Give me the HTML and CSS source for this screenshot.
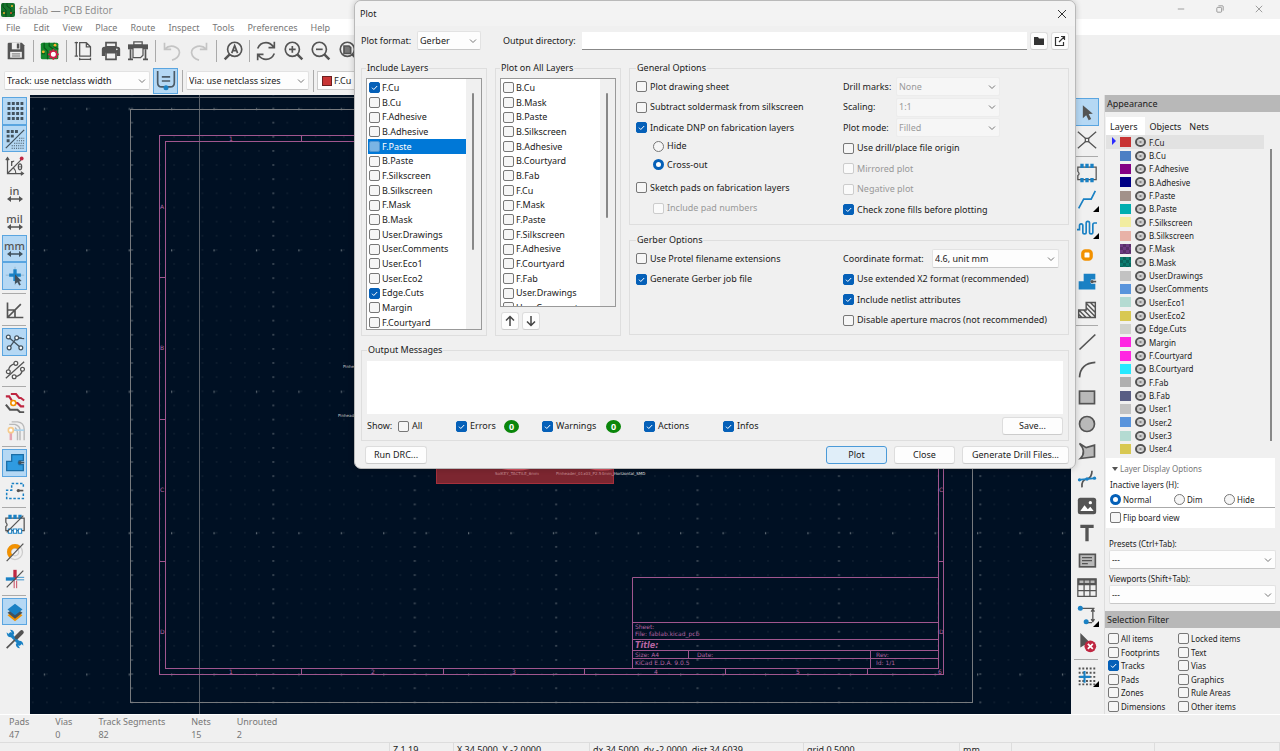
FILE: index.html
```html
<!DOCTYPE html>
<html lang="en">
<head>
<meta charset="utf-8">
<title>fablab — PCB Editor</title>
<link rel="stylesheet" href="styles.css">
</head>
<body>
<div class="app">
  <header class="titlebar">
    <svg class="app-icon" viewBox="0 0 14 14"><rect width="14" height="14" rx="2" fill="#14722a"/><path d="M2 0v4l3 3v7M6 0v3l4 3v3M0 9h3l2 3M10 14v-3l4-2" fill="none" stroke="#0a4a18"/><circle cx="11" cy="3" r="1" fill="#f5b12c"/><circle cx="3" cy="10" r="1" fill="#f5b12c"/><circle cx="10" cy="10" r="1" fill="#d9502c"/></svg>
    <span class="title-text">fablab — PCB Editor</span>
    <div class="window-buttons">
      <button aria-label="Minimize"><svg viewBox="0 0 10 10"><path d="M1 5h8"/></svg></button>
      <button aria-label="Restore"><svg viewBox="0 0 10 10"><rect x="1" y="3" width="6" height="6" rx="1"/><path d="M3 1h5q1 0 1 1v5"/></svg></button>
      <button aria-label="Close window"><svg viewBox="0 0 10 10"><path d="M1 1l8 8M9 1l-8 8"/></svg></button>
    </div>
  </header>
  <nav class="menubar">
    <button>File</button><button>Edit</button><button>View</button><button>Place</button><button>Route</button><button>Inspect</button><button>Tools</button><button>Preferences</button><button>Help</button>
  </nav>
  <div class="toolbar main-tools">
    <button class="tool" aria-label="Save"><svg viewBox="0 0 24 24"><path d="M3 2h16l3 3v17H2V3z" fill="#545454"/><path d="M7 2h10v8H7z" fill="#f0f0f0"/><path d="M13 3h3v6h-3z" fill="#545454"/><path d="M5 13h14v7H5z" fill="#f0f0f0"/><path d="M7 15.500h10M7 18h10" stroke="#545454"/></svg></button>
    <span class="sep"></span>
    <button class="tool" aria-label="Board setup"><svg viewBox="0 0 24 24"><rect x="1" y="2" width="21" height="20" rx="2" fill="#168a2e"/><path d="M5 2v6l4 4v10M11 2v4l5 4M2 15h4M17 2v5l5 3" fill="none" stroke="#0a5a1a" stroke-width="1.500"/><circle cx="4" cy="13" r="1.700" fill="#f5b12c"/><circle cx="18" cy="5" r="1.700" fill="#f5b12c"/><circle cx="16" cy="16" r="4" fill="#fff" stroke="#d0214a" stroke-width="2"/><path d="M16 9.500v3M16 19.500v3M9.500 16h3M19.500 16h3M11.500 11.500l2 2M18.500 18.500l2 2M20.500 11.500l-2 2M13.500 18.500l-2 2" stroke="#d0214a" stroke-width="2"/></svg></button>
    <span class="sep"></span>
    <button class="tool" aria-label="Page settings"><svg viewBox="0 0 24 24" class="line thin"><path d="M8 2h8l5 5v11H8zM16 2v5h5M4 1v17M2 2h4M2 18h4M8 22h13M8 20v3M21 20v3"/></svg></button>
    <button class="tool" aria-label="Print"><svg viewBox="0 0 24 24"><path d="M6 2h12v5H6z" fill="#f0f0f0" stroke="#545454" stroke-width="2"/><path d="M4 7h16q3 0 3 3v8h-4v-4H5v4H1v-8q0-3 3-3z" fill="#545454"/><path d="M6 14h12v8H6z" fill="#f0f0f0" stroke="#545454" stroke-width="2"/><circle cx="19" cy="10" r="1" fill="#fff"/></svg></button>
    <button class="tool" aria-label="Plot"><svg viewBox="0 0 24 24"><path d="M7 1h10v4H7z" fill="#f0f0f0" stroke="#545454" stroke-width="1.500"/><path d="M0 4h24v6H0z" fill="#545454"/><path d="M6 8h12v9l-3 3H6z" fill="#f0f0f0" stroke="#545454" stroke-width="1.500"/><path d="M3 10v12M21 10v12M0 22h6M18 22h6" fill="none" stroke="#545454" stroke-width="2"/></svg></button>
    <span class="sep"></span>
    <button class="tool" aria-label="Undo"><svg viewBox="0 0 24 24" class="line faint"><path d="M3 2v8h8M3 10q5-5 11-3.500q7 2 7 7.500q-1 7-9 9"/></svg></button>
    <button class="tool" aria-label="Redo"><svg viewBox="0 0 24 24" class="line faint"><path d="M21 2v8h-8M21 10q-5-5-11-3.500q-7 2-7 7.500q1 7 9 9"/></svg></button>
    <span class="sep"></span>
    <button class="tool" aria-label="Find"><svg viewBox="0 0 24 24" class="line"><circle cx="14" cy="10" r="8.500"/><path d="M8 16l-6 6" stroke-width="3"/><path d="M10.500 14.500L14 5.500l3.500 9M12 11.500h4"/></svg></button>
    <span class="sep"></span>
    <button class="tool" aria-label="Refresh"><svg viewBox="0 0 24 24" class="line"><path d="M2 9q3-7 10-7q5 0 9 5M22 1v7h-7M22 15q-3 7-10 7q-5 0-9-5M2 23v-7h7"/></svg></button>
    <button class="tool" aria-label="Zoom in"><svg viewBox="0 0 24 24" class="line"><circle cx="10" cy="10" r="8.500"/><path d="M16 16l6 6" stroke-width="3"/><path d="M6 10h8M10 6v8"/></svg></button>
    <button class="tool" aria-label="Zoom out"><svg viewBox="0 0 24 24" class="line"><circle cx="10" cy="10" r="8.500"/><path d="M16 16l6 6" stroke-width="3"/><path d="M6 10h8"/></svg></button>
    <button class="tool" aria-label="Zoom to fit"><svg viewBox="0 0 24 24" class="line"><circle cx="10" cy="10" r="8.500"/><path d="M16 16l6 6" stroke-width="3"/><path d="M6 6h6l2 2v7H6z" fill="#777"/></svg></button>
  </div>
  <div class="toolbar aux-tools">
    <select class="select track-select" aria-label="Track width"><option>Track: use netclass width</option></select>
    <button class="tool on" aria-label="Auto track width"><svg viewBox="0 0 24 24"><path d="M2 0v14q0 5 5 5h10q5 0 5-5V0M7 7h10M7 12h10" fill="none" stroke="#4b5a66" stroke-width="2"/><circle cx="12" cy="20" r="3" fill="#1a81c4"/></svg></button>
    <span class="sep"></span>
    <select class="select via-select" aria-label="Via size"><option>Via: use netclass sizes</option></select>
    <span class="sep"></span>
    <div class="layer-select"><span class="swatch"></span><select class="select" aria-label="Active layer"><option>F.Cu</option></select></div>
  </div>

  <main class="workspace">
    <div class="side-tools">
      <button class="tool on" aria-label="Show grid"><svg viewBox="0 0 24 24"><path d="M3 3h19M3 9h19M3 15h19M3 21h19" stroke="#42525e" stroke-width="3.500" stroke-dasharray="3.500 1.700"/></svg></button>
      <button class="tool on" aria-label="Grid overrides"><svg viewBox="0 0 24 24"><path d="M2 3h14M2 8.500h9M2 14h4" stroke="#42525e" stroke-width="3.500" stroke-dasharray="3.500 1.500"/><path d="M1 23L23 1" stroke="#42525e" stroke-width="1.500"/><path d="M17 11h6M14 14h9M11 17h12M8 20h15M8 23h15" stroke="#42525e" stroke-width="1.300" stroke-dasharray="1.300 1.300"/></svg></button>
      <button class="tool" aria-label="Polar coordinates"><svg viewBox="0 0 24 24" class="line"><path d="M3 2v19h19M3 21L19 5M10 14q3 3 3 7M1 5l2-3 2 3M19 19l3 2-3 2" stroke-width="1.500"/><path d="M8 12V6M8 8q1-2 3-2" stroke-width="1.500"/><ellipse cx="18" cy="13" rx="2" ry="3.500" stroke-width="1.500"/><path d="M16 13h4" stroke-width="1"/><circle cx="20" cy="3" r="2.300" fill="#bf2641" stroke="none"/></svg></button>
      <button class="tool unit" aria-label="Inches"><span>in</span><svg viewBox="0 0 18 6"><path d="M3 3h12" stroke="#545454" stroke-width="1.500"/><path d="M5 0v6L1 3zM13 0v6l4-3z" fill="#545454"/></svg></button>
      <button class="tool unit" aria-label="Mils"><span>mil</span><svg viewBox="0 0 18 6"><path d="M3 3h12" stroke="#545454" stroke-width="1.500"/><path d="M5 0v6L1 3zM13 0v6l4-3z" fill="#545454"/></svg></button>
      <button class="tool unit on" aria-label="Millimeters"><span>mm</span><svg viewBox="0 0 18 6"><path d="M3 3h12" stroke="#42525e" stroke-width="1.500"/><path d="M5 0v6L1 3zM13 0v6l4-3z" fill="#42525e"/></svg></button>
      <button class="tool on" aria-label="Full-window crosshair"><svg viewBox="0 0 24 24"><path d="M12 1v22M1 11h22" stroke="#8fb0c8"/><path d="M12 4v14M5 11h14" stroke="#1a81c4" stroke-width="4"/><path d="M12 10l8 8-3 .5 2 4-2 1-2-4-3 2z" fill="#42525e"/></svg></button>
      <span class="sep"></span>
      <button class="tool" aria-label="Constrain angles"><svg viewBox="0 0 24 24" class="line"><path d="M3 3v18h19M3 21L19 5M3 12h9v9" stroke-width="2"/></svg></button>
      <span class="sep"></span>
      <button class="tool on" aria-label="Ratsnest"><svg viewBox="0 0 24 24" class="line"><path d="M4 6l15 13M5 19L14 7l9 1M13 7h7" stroke="#42525e" stroke-width="1.500"/><g fill="#fff" stroke="#42525e" stroke-width="1.500"><circle cx="4" cy="6" r="2.300"/><circle cx="14" cy="7" r="2.300"/><circle cx="5" cy="19" r="2.300"/><circle cx="19" cy="19" r="2.300"/></g></svg></button>
      <button class="tool" aria-label="Curved ratsnest"><svg viewBox="0 0 24 24" class="line"><path d="M1 22L23 2M4 14q0-8 9-10M11 20q9 0 10-9" stroke-width="1.500"/><g fill="#fff" stroke-width="1.500"><circle cx="4" cy="14" r="2.300"/><circle cx="13" cy="4" r="2.300"/><circle cx="11" cy="20" r="2.300"/><circle cx="21" cy="11" r="2.300"/></g></svg></button>
      <span class="sep"></span>
      <button class="tool" aria-label="Highlight nets"><svg viewBox="0 0 24 24" class="line"><path d="M7 1h6l4 5h2l4 3M1 4h4l5 8h5l4 4h4" stroke="#bf2641" stroke-width="2.500"/><path d="M1 14l5 6h9l3 3h5" stroke-width="2.500"/><circle cx="10" cy="12" r="3" fill="#fff" stroke="#f29100" stroke-width="2"/></svg></button>
      <button class="tool" aria-label="Net colors"><svg viewBox="0 0 24 24" class="line"><path d="M5 4h7q6 2 6 7v12M12 8q3 2 3 6v9M8 1h7q8 1 8 9v13" stroke="#b9b9b9" stroke-width="1.700"/><path d="M7 12v11" stroke="#e6a4b1" stroke-width="3"/><path d="M7 11h16" stroke="#a9d2ec" stroke-width="2"/><circle cx="7" cy="11" r="3" fill="#fff" stroke="#f6cb8b"/></svg></button>
      <span class="sep"></span>
      <button class="tool on" aria-label="Show zone fills"><svg viewBox="0 0 24 24"><path d="M8 2h14v7h-5q-2 3 0 5h5v7H2V10h6z" fill="#2f9be0" stroke="#1a6da6" stroke-width="1.500"/><circle cx="18" cy="11.500" r="2" fill="#42525e"/><path d="M18 11.500h5" stroke="#42525e" stroke-width="2"/></svg></button>
      <button class="tool" aria-label="Show zone outlines"><svg viewBox="0 0 24 24"><path d="M8 3h14v4M22 15v6H2V11h6V3" fill="none" stroke="#1a81c4" stroke-width="1.800" stroke-dasharray="3 2"/><circle cx="16" cy="11.500" r="2" fill="#545454"/><path d="M16 11.500h6" stroke="#545454" stroke-width="2"/></svg></button>
      <span class="sep"></span>
      <button class="tool" aria-label="Sketch footprints"><svg viewBox="0 0 24 24"><path d="M1 5h22v15H1v-5q3-2 0-5z" fill="none" stroke="#545454" stroke-width="1.500"/><path d="M4 1h4v5H4zM10 1h4v5h-4zM16 1h4v5h-4z" fill="#1a81c4"/><path d="M4 18h4v5H4zM10 18h4v5h-4zM16 18h4v5h-4z" fill="#fff" stroke="#1a81c4" stroke-width="1.300"/><path d="M2 22L22 2" stroke="#545454" stroke-width="1.500"/></svg></button>
      <button class="tool" aria-label="Sketch vias"><svg viewBox="0 0 24 24"><circle cx="12" cy="12" r="9" fill="none" stroke="#ccc" stroke-width="1.500"/><circle cx="12" cy="12" r="4.500" fill="none" stroke="#ccc" stroke-width="1.500"/><path d="M7 17A7 7 0 0 1 17 7" fill="none" stroke="#f29100" stroke-width="5"/><path d="M2 23L22 2" stroke="#545454" stroke-width="1.500"/></svg></button>
      <button class="tool" aria-label="Sketch tracks"><svg viewBox="0 0 24 24"><path d="M12 1v12" stroke="#bf2641" stroke-width="4"/><path d="M1 12h11" stroke="#1a81c4" stroke-width="4"/><path d="M14 10h9M14 13h9" stroke="#1a81c4"/><path d="M11 14v9M14 14v9" stroke="#bf2641"/><path d="M2 22L22 2" stroke="#545454" stroke-width="1.500"/></svg></button>
      <span class="sep"></span>
      <button class="tool on" aria-label="Layers manager"><svg viewBox="0 0 24 24"><path d="M3 16l9-6 9 6-9 7z" fill="#f29100"/><path d="M3 13l9-6 9 6-9 7z" fill="#42525e"/><path d="M3 9l9-7 9 7-9 7z" fill="#1a81c4"/></svg></button>
      <button class="tool" aria-label="Properties"><svg viewBox="0 0 24 24"><path d="M5 5l14 14" stroke="#1a81c4" stroke-width="4"/><path d="M2 4l3 3 3-3-2-3q5 0 5 5l-4 4q-5 0-5-6zM22 20l-3-3-3 3 2 3q-5 0-5-5l4-4q5 0 5 6z" fill="#1a81c4"/><path d="M2 23l10-10" stroke="#545454" stroke-width="2"/><path d="M14 10l6-6" stroke="#545454" stroke-width="5" stroke-linecap="round"/></svg></button>
    </div>

    <svg class="canvas" viewBox="30 95 1041 619" preserveAspectRatio="xMidYMid slice">
      <defs>
        <pattern id="grid" x="-3" y="101" width="14.140" height="14.140" patternUnits="userSpaceOnUse"><rect x="7" y="7" width="1" height="1" fill="#2b3846"/></pattern>
        <pattern id="major" x="60" y="101" width="141.400" height="14.140" patternUnits="userSpaceOnUse"><rect x="71" y="7" width="2" height="1" fill="#59646d"/></pattern>
        <pattern id="rows" x="30" y="37" width="42.420" height="141.400" patternUnits="userSpaceOnUse"><rect x="14" y="71" width="1" height="2" fill="#7b858c"/></pattern>
      </defs>
      <rect x="30" y="95" width="1041" height="619" fill="#001023"/>
      <rect x="30" y="95" width="1041" height="619" fill="url(#grid)"/>
      <rect x="30" y="95" width="1041" height="619" fill="url(#major)"/>
      <rect x="30" y="95" width="1041" height="619" fill="url(#rows)"/>
      <g fill="none" stroke="#596069"><path d="M30 97.500h1041M199.500 95v619"/><rect x="130.500" y="109.500" width="842" height="593" stroke="#777a7e"/></g>
      <g fill="none" stroke="#a0568f">
        <rect x="159.500" y="135.500" width="784" height="539"/><rect x="165.500" y="141.500" width="773" height="527"/>
        <path d="M301.500 135v6M443.500 135v6M301.500 668v6M443.500 668v6M584.500 668v6M725.500 668v6M867.500 668v6M159 277.500h6M159 419.500h6M159 561.500h6M938 561.500h6"/>
        <path d="M632.500 668V577.500H938M632 622.500h306M632 639.500h306M632 650.500h306M632 658.500h306M688.500 650v8M870.500 650v18"/>
      </g>
      <g class="sheet-text">
        <text x="229" y="141">1</text><text x="229" y="674">1</text><text x="371" y="674">2</text><text x="512" y="674">3</text><text x="654" y="674">4</text><text x="796" y="674">5</text><text x="938" y="674">6</text>
        <text x="160" y="209">A</text><text x="160" y="350">B</text><text x="160" y="492">C</text><text x="160" y="634">D</text><text x="939" y="492">C</text><text x="939" y="634">D</text>
        <text x="635" y="629">Sheet:</text><text x="635" y="636">File: fablab.kicad_pcb</text><text x="635" y="648" class="sheet-title">Title:</text>
        <text x="635" y="657">Size: A4</text><text x="697" y="657">Date:</text><text x="876" y="657">Rev:</text><text x="635" y="665">KiCad E.D.A. 9.0.5</text><text x="876" y="665">Id: 1/1</text>
      </g>
      <rect x="436.500" y="400.500" width="177" height="83" fill="#7c2630" stroke="#a5303c"/>
      <path d="M502 468q14 3 28 0M590 468q12 3 24 0" fill="none" stroke="#d5505f" stroke-width="2"/>
      <g class="board-text"><text x="343" y="368">Pinheader</text><text x="338" y="417">Pinheader</text><text x="495" y="475" fill="#c98f95">SolKEY_TACTILE_6mm</text><text x="556" y="475" fill="#c98f95">Pinheader_01x03_P2.54mm<tspan fill="#e0e0e0">_Horizontal_SMD</tspan></text></g>
    </svg>

    <div class="side-tools right-tools">
      <button class="tool on" aria-label="Select"><svg viewBox="0 0 24 24"><path d="M7 4l12 10-5 .5 3 6-3 1.500-3-6-4 3.500z" fill="#545454"/></svg></button>
      <button class="tool" aria-label="Local ratsnest"><svg viewBox="0 0 24 24" class="line thin"><rect x="10" y="10" width="4" height="4"/><path d="M10 10L1 2M14 10l9-8M10 14l-9 8M14 14l9 8"/></svg></button>
      <span class="sep"></span>
      <button class="tool" aria-label="Footprint"><svg viewBox="0 0 24 24"><path d="M1 5h22v15H1v-5q3-2 0-5z" fill="none" stroke="#545454" stroke-width="1.500"/><path d="M4 1h4v5H4zM10 1h4v5h-4zM16 1h4v5h-4zM4 18h4v5H4zM10 18h4v5h-4zM16 18h4v5h-4z" fill="#1a81c4"/></svg></button>
      <button class="tool more" aria-label="Route track"><svg viewBox="0 0 24 24" class="line"><path d="M2 22l6-11h9l5-10" stroke="#1a81c4"/></svg></button>
      <button class="tool more" aria-label="Tune length"><svg viewBox="0 0 24 24" class="line"><path d="M0 14h3V9q0-2 2-2t2 2v8q0 2 2 2t2-2V6q0-2 2-2t2 2v11q0 2 2 2t2-2V8q0-2 2-2h3" stroke="#1a81c4"/></svg></button>
      <button class="tool" aria-label="Via"><svg viewBox="0 0 24 24"><rect x="7" y="7" width="10" height="10" rx="3" fill="#fff" stroke="#f29100" stroke-width="4"/></svg></button>
      <button class="tool" aria-label="Filled zone"><svg viewBox="0 0 24 24"><path d="M8 2h14v7h-5q-2 3 0 5h5v7H2V11h6z" fill="#1a81c4"/><circle cx="18" cy="11.500" r="2" fill="#545454"/><path d="M18 11.500h5" stroke="#545454" stroke-width="2"/></svg></button>
      <button class="tool" aria-label="Rule area"><svg viewBox="0 0 24 24" class="line"><path d="M11 3h11v18H2v-9h9zM11 4l11 11M11 9l11 11M3 13l8 8M8 12l9 9M16 3l6 6M2 17l4 4" stroke-width="1.700"/></svg></button>
      <span class="sep"></span>
      <button class="tool" aria-label="Line"><svg viewBox="0 0 24 24" class="line"><path d="M3 21L22 3"/></svg></button>
      <button class="tool" aria-label="Arc"><svg viewBox="0 0 24 24" class="line"><path d="M3 22Q4 5 22 4"/></svg></button>
      <button class="tool" aria-label="Rectangle"><svg viewBox="0 0 24 24" class="line"><rect x="3" y="5" width="18" height="15" fill="#b9b9b9"/></svg></button>
      <button class="tool" aria-label="Circle"><svg viewBox="0 0 24 24" class="line"><circle cx="12" cy="12" r="9" fill="#b9b9b9"/></svg></button>
      <button class="tool" aria-label="Polygon"><svg viewBox="0 0 24 24" class="line"><path d="M3 3l8 5 10-3v14L4 21q8-8-1-18z" fill="#b9b9b9"/></svg></button>
      <button class="tool" aria-label="Bezier"><svg viewBox="0 0 24 24" class="line"><path d="M6 22q-1-9 6-10q6-2 6-10"/><path d="M2 13l20-2" stroke="#1a81c4"/><circle cx="3" cy="13" r="2" fill="#1a81c4" stroke="none"/><circle cx="12" cy="12" r="2" fill="#1a81c4" stroke="none"/><circle cx="21" cy="11" r="2" fill="#1a81c4" stroke="none"/></svg></button>
      <button class="tool" aria-label="Image"><svg viewBox="0 0 24 24"><rect x="1" y="2" width="22" height="20" rx="3" fill="#545454"/><path d="M4 18l5-7 4 5 3-3 4 5z" fill="#fff"/><circle cx="16" cy="8" r="2" fill="#fff"/></svg></button>
      <button class="tool" aria-label="Text"><svg viewBox="0 0 24 24"><path d="M4 4h16M12 4v18" stroke="#545454" stroke-width="4"/></svg></button>
      <button class="tool" aria-label="Text box"><svg viewBox="0 0 24 24" class="line"><rect x="3" y="4" width="19" height="15" fill="#b9b9b9"/><path d="M6 8h12M6 11.500h12M6 15h7" stroke-width="1.500"/></svg></button>
      <button class="tool" aria-label="Table"><svg viewBox="0 0 24 24" class="line"><path d="M2 2h20v5H2z" fill="#b9b9b9"/><path d="M1 1h22v21H1zM1 8h22M1 15h22M8.500 1v21M15.500 1v21" stroke-width="1.500"/></svg></button>
      <button class="tool more" aria-label="Dimension"><svg viewBox="0 0 24 24" class="line"><path d="M4 4h17M19 6v13M17 8l2-3 2 3M17 17l2 3 2-3M12 21h6" stroke-width="1.500"/><circle cx="4" cy="4" r="3" fill="#1a81c4" stroke="none"/><circle cx="11" cy="20" r="3" fill="#1a81c4" stroke="none"/></svg></button>
      <button class="tool" aria-label="Delete"><svg viewBox="0 0 24 24"><path d="M4 0l12 12-5 .5 1 6-3-4-5 3z" fill="#545454"/><circle cx="16" cy="16" r="7" fill="#bf2641"/><path d="M13 13l6 6M19 13l-6 6" stroke="#fff" stroke-width="2"/></svg></button>
      <span class="sep"></span>
      <button class="tool more" aria-label="Grid origin"><svg viewBox="0 0 24 24"><path d="M2 3h20M2 8h20M2 13h20M2 18h20M2 22h20" stroke="#545454" stroke-width="2.300" stroke-dasharray="2.300 2.100"/><path d="M9 6v14M3 13h13" stroke="#1a81c4" stroke-width="2.500"/></svg></button>
    </div>

    <aside class="panel">
      <h2>Appearance</h2>
      <div class="tabs"><button class="active">Layers</button><button>Objects</button><button>Nets</button></div>
      <ul class="layers">
        <li class="current"><i style="background:#c83434"></i><b></b>F.Cu</li>
        <li><i style="background:#4d7fc4"></i><b></b>B.Cu</li>
        <li><i style="background:#840084"></i><b></b>F.Adhesive</li>
        <li><i style="background:#000084"></i><b></b>B.Adhesive</li>
        <li><i style="background:#a2918a"></i><b></b>F.Paste</li>
        <li><i style="background:#00aeb0"></i><b></b>B.Paste</li>
        <li><i style="background:#f2eda1"></i><b></b>F.Silkscreen</li>
        <li><i style="background:#e8b2a7"></i><b></b>B.Silkscreen</li>
        <li><i class="check" style="background-color:#6e3b82"></i><b></b>F.Mask</li>
        <li><i class="check" style="background-color:#0c7c70"></i><b></b>B.Mask</li>
        <li><i style="background:#c2c2c2"></i><b></b>User.Drawings</li>
        <li><i style="background:#5994dc"></i><b></b>User.Comments</li>
        <li><i style="background:#b4dbd2"></i><b></b>User.Eco1</li>
        <li><i style="background:#d8c852"></i><b></b>User.Eco2</li>
        <li><i style="background:#d0d2cd"></i><b></b>Edge.Cuts</li>
        <li><i style="background:#ff26e2"></i><b></b>Margin</li>
        <li><i style="background:#ff26e2"></i><b></b>F.Courtyard</li>
        <li><i style="background:#26e9ff"></i><b></b>B.Courtyard</li>
        <li><i style="background:#afafaf"></i><b></b>F.Fab</li>
        <li><i style="background:#585d84"></i><b></b>B.Fab</li>
        <li><i style="background:#c2c2c2"></i><b></b>User.1</li>
        <li><i style="background:#5994dc"></i><b></b>User.2</li>
        <li><i style="background:#b4dbd2"></i><b></b>User.3</li>
        <li><i style="background:#d8c852"></i><b></b>User.4</li>
      </ul>
      <div class="display-options">
        <button class="disclosure">Layer Display Options</button>
        <div class="option-label">Inactive layers (H):</div>
        <div class="radios">
          <label><input type="radio" name="inactive" checked>Normal</label>
          <label><input type="radio" name="inactive">Dim</label>
          <label><input type="radio" name="inactive">Hide</label>
        </div>
        <label class="flip"><input type="checkbox">Flip board view</label>
      </div>
      <div class="presets">
        <label for="presets">Presets (Ctrl+Tab):</label>
        <select id="presets" class="select"><option>---</option></select>
        <label for="viewports">Viewports (Shift+Tab):</label>
        <select id="viewports" class="select"><option>---</option></select>
      </div>
      <h2>Selection Filter</h2>
      <div class="filters">
        <label><input type="checkbox">All items</label><label><input type="checkbox">Locked items</label>
        <label><input type="checkbox">Footprints</label><label><input type="checkbox">Text</label>
        <label><input type="checkbox" checked>Tracks</label><label><input type="checkbox">Vias</label>
        <label><input type="checkbox">Pads</label><label><input type="checkbox">Graphics</label>
        <label><input type="checkbox">Zones</label><label><input type="checkbox">Rule Areas</label>
        <label><input type="checkbox">Dimensions</label><label><input type="checkbox">Other items</label>
      </div>
    </aside>
  </main>

  <dl class="info">
    <div><dt>Pads</dt><dd>47</dd></div><div><dt>Vias</dt><dd>0</dd></div><div><dt>Track Segments</dt><dd>82</dd></div><div><dt>Nets</dt><dd>15</dd></div><div><dt>Unrouted</dt><dd>2</dd></div>
  </dl>
  <footer class="status"><span></span><span>Z 1.19</span><span>X 34.5000&nbsp; Y -2.0000</span><span>dx 34.5000&nbsp; dy -2.0000&nbsp; dist 34.6039</span><span>grid 0.5000</span><span>mm</span><span></span><span></span></footer>
</div>

<section class="dialog" role="dialog" aria-labelledby="dialog-title">
  <header><h1 id="dialog-title">Plot</h1><button aria-label="Close dialog"><svg viewBox="0 0 10 10"><path d="M1 1l8 8M9 1l-8 8"/></svg></button></header>
  <div class="output-row">
    <label class="format-label" for="format">Plot format:</label><select id="format" class="select"><option>Gerber</option></select>
    <label class="outdir-label" for="outdir">Output directory:</label><input id="outdir" type="text">
    <button class="button icon" aria-label="Browse"><svg viewBox="0 0 12 12"><path d="M1 2h4l1 1.500h5V10H1z" fill="#333"/></svg></button>
    <button class="button icon" aria-label="Open directory"><svg viewBox="0 0 12 12"><path d="M5 2.500H1.500v8h8V7M7 1.500h3.500V5M10.500 1.500L5 7" fill="none" stroke="#333" stroke-width="1.200"/></svg></button>
  </div>
  <div class="columns">
    <fieldset class="include"><legend>Include Layers</legend>
      <div class="list">
        <label><input type="checkbox" checked>F.Cu</label><label><input type="checkbox">B.Cu</label><label><input type="checkbox">F.Adhesive</label><label><input type="checkbox">B.Adhesive</label><label class="selected"><input type="checkbox">F.Paste</label><label><input type="checkbox">B.Paste</label><label><input type="checkbox">F.Silkscreen</label><label><input type="checkbox">B.Silkscreen</label><label><input type="checkbox">F.Mask</label><label><input type="checkbox">B.Mask</label><label><input type="checkbox">User.Drawings</label><label><input type="checkbox">User.Comments</label><label><input type="checkbox">User.Eco1</label><label><input type="checkbox">User.Eco2</label><label><input type="checkbox" checked>Edge.Cuts</label><label><input type="checkbox">Margin</label><label><input type="checkbox">F.Courtyard</label>
      </div>
    </fieldset>
    <fieldset class="on-all"><legend>Plot on All Layers</legend>
      <div class="list">
        <label><input type="checkbox">B.Cu</label><label><input type="checkbox">B.Mask</label><label><input type="checkbox">B.Paste</label><label><input type="checkbox">B.Silkscreen</label><label><input type="checkbox">B.Adhesive</label><label><input type="checkbox">B.Courtyard</label><label><input type="checkbox">B.Fab</label><label><input type="checkbox">F.Cu</label><label><input type="checkbox">F.Mask</label><label><input type="checkbox">F.Paste</label><label><input type="checkbox">F.Silkscreen</label><label><input type="checkbox">F.Adhesive</label><label><input type="checkbox">F.Courtyard</label><label><input type="checkbox">F.Fab</label><label><input type="checkbox">User.Drawings</label><label><input type="checkbox">User.Comments</label>
      </div>
      <div class="order">
        <button class="button icon" aria-label="Move up"><svg viewBox="0 0 12 12"><path d="M6 11V2M2 5.500L6 1.500l4 4" fill="none" stroke="#444" stroke-width="1.500"/></svg></button>
        <button class="button icon" aria-label="Move down"><svg viewBox="0 0 12 12"><path d="M6 1v9M2 6.500l4 4 4-4" fill="none" stroke="#444" stroke-width="1.500"/></svg></button>
      </div>
    </fieldset>
    <div class="options">
      <fieldset class="two-col"><legend>General Options</legend>
        <div class="col">
          <label><input type="checkbox">Plot drawing sheet</label>
          <label><input type="checkbox">Subtract soldermask from silkscreen</label>
          <label><input type="checkbox" checked>Indicate DNP on fabrication layers</label>
          <label class="sub tight"><input type="radio" name="dnp">Hide</label>
          <label class="sub"><input type="radio" name="dnp" checked>Cross-out</label>
          <label class="loose"><input type="checkbox">Sketch pads on fabrication layers</label>
          <label class="sub tight off"><input type="checkbox" disabled>Include pad numbers</label>
        </div>
        <div class="col">
          <div class="field"><label for="drill">Drill marks:</label><select id="drill" class="select" disabled><option>None</option></select></div>
          <div class="field"><label for="scaling">Scaling:</label><select id="scaling" class="select" disabled><option>1:1</option></select></div>
          <div class="field"><label for="mode">Plot mode:</label><select id="mode" class="select" disabled><option>Filled</option></select></div>
          <label><input type="checkbox">Use drill/place file origin</label>
          <label class="off"><input type="checkbox" disabled>Mirrored plot</label>
          <label class="off"><input type="checkbox" disabled>Negative plot</label>
          <label><input type="checkbox" checked>Check zone fills before plotting</label>
        </div>
      </fieldset>
      <fieldset class="two-col"><legend>Gerber Options</legend>
        <div class="col">
          <label><input type="checkbox">Use Protel filename extensions</label>
          <label><input type="checkbox" checked>Generate Gerber job file</label>
        </div>
        <div class="col">
          <div class="field wide"><label for="coord">Coordinate format:</label><select id="coord" class="select"><option>4.6, unit mm</option></select></div>
          <label><input type="checkbox" checked>Use extended X2 format (recommended)</label>
          <label><input type="checkbox" checked>Include netlist attributes</label>
          <label><input type="checkbox">Disable aperture macros (not recommended)</label>
        </div>
      </fieldset>
    </div>
  </div>
  <fieldset class="messages"><legend>Output Messages</legend>
    <textarea aria-label="Output messages" readonly></textarea>
    <div class="show-row">
      <span class="show">Show:</span>
      <label class="all"><input type="checkbox">All</label>
      <label class="errors"><input type="checkbox" checked>Errors</label><span class="badge">0</span>
      <label class="warnings"><input type="checkbox" checked>Warnings</label><span class="badge">0</span>
      <label class="actions"><input type="checkbox" checked>Actions</label>
      <label><input type="checkbox" checked>Infos</label>
      <button class="button save">Save...</button>
    </div>
  </fieldset>
  <footer><button class="button drc">Run DRC...</button><button class="button primary">Plot</button><button class="button close">Close</button><button class="button drill">Generate Drill Files...</button></footer>
</section>
</body>
</html>
```
FILE: styles.css
```css
* { box-sizing: border-box; }
body { margin: 0; height: 100vh; overflow: hidden; position: relative; background: #f0f0f0; color: #1b1b1b; font: 9px/14px "Noto Sans", "Open Sans", sans-serif; }
button, input, select, textarea { font: inherit; color: inherit; margin: 0; }
button { padding: 0; border: 0; background: none; white-space: nowrap; }
label { display: flex; align-items: center; white-space: nowrap; }
.app { height: 100vh; display: flex; flex-direction: column; }

.titlebar { flex: none; height: 19px; background: #f3f3f3; display: flex; align-items: center; padding: 0 2px 0 1px; color: #8a8a8a; }
.title-text { font-family: "Open Sans", sans-serif; font-size: 10px; }
.app-icon { width: 14px; height: 14px; margin-right: 4px; }
.window-buttons { margin-left: auto; display: flex; }
.window-buttons button { width: 39px; height: 18px; }
.window-buttons svg { width: 8px; height: 8px; fill: none; stroke: #888; }
.menubar { flex: none; height: 16px; line-height: 18px; background: #fff; display: flex; gap: 13px; padding-left: 6px; color: #777; }

.toolbar { flex: none; display: flex; align-items: center; }
.main-tools { height: 31px; padding-left: 2px; }
.aux-tools { height: 29px; padding-left: 4px; }
.tool { position: relative; flex: none; display: flex; align-items: center; justify-content: center; width: 25px; height: 27px; }
.tool svg { width: 20px; height: 20px; }
.tool:nth-of-type(odd) { height: 28px; }
.main-tools .tool { width: 27px; }
.main-tools .tool:nth-of-type(odd) { width: 28px; }
.tool.on { background: #b5d8f4; border: 1px solid #5aa5e0; background-clip: padding-box; }
.aux-tools .tool.on { height: 26px; margin-left: 3px; }
.line { fill: none; stroke: #545454; stroke-width: 2; }
.thin { stroke-width: 1.5; }
.faint { stroke: #c4c4c4; }
.toolbar .sep { flex: none; width: 6px; height: 22px; background: linear-gradient(#aaa, #aaa) center / 1px 100% no-repeat; }
.aux-tools .sep { width: 8px; }

.select { appearance: none; height: 19px; padding: 0 16px 0 2px; border: 1px solid #e2e2e2; border-bottom-color: #c8c8c8; border-radius: 2px; line-height: 16px; opacity: 1; background: #fdfdfd url("data:image/svg+xml,%3Csvg xmlns='http://www.w3.org/2000/svg' viewBox='0 0 8 8'%3E%3Cpath d='M1 2.500l3 3 3-3' fill='none' stroke='%23777'/%3E%3C/svg%3E") right 3px center / 8px 8px no-repeat; }
.select:disabled { color: #9a9a9a; background-color: #f6f6f6; border-color: #ececec; }
.track-select { width: 146px; }
.via-select { width: 123px; }
.layer-select { display: flex; align-items: center; width: 150px; border: 1px solid #ccc; background: #fdfdfd; padding-left: 4px; height: 19px; }
.layer-select .select { border: 0; flex: 1; height: 17px; }
.swatch { width: 10px; height: 10px; background: #c83434; border: 1px solid #6b1f1f; }

.workspace { flex: 1; min-height: 0; display: flex; }
.side-tools { flex: none; width: 30px; padding: 2px 0 0 2px; }
.right-tools { width: 33px; padding: 3px 0 0 3px; }
.right-tools .tool { height: 27px; }
.right-tools .tool:nth-of-type(3n + 1) { height: 28px; }
.side-tools .sep { display: block; height: 6px; width: 24px; background: linear-gradient(#aaa, #aaa) center / 100% 1px no-repeat; }
.side-tools .sep:nth-of-type(even) { height: 5px; }
.unit { flex-direction: column; font-size: 11px; line-height: 11px; color: #545454; font-weight: 500; }
.tool.unit svg { width: 18px; height: 6px; }
.more::after { content: ""; position: absolute; right: 0; bottom: 2px; border: 3px solid transparent; border-right-color: #000; border-bottom-color: #000; }
.canvas { flex: 1; min-width: 0; height: 100%; display: block; background: #001023; }
.sheet-text { fill: #b765a2; font: 6px "DejaVu Sans", sans-serif; }
.sheet-title { font: italic bold 8px "DejaVu Sans", sans-serif; }
.board-text { fill: #c9c9c9; font: 4px "DejaVu Sans", sans-serif; }

.panel { flex: none; width: 176px; border-left: 1px solid #ddd; font-size: 8px; line-height: 13px; display: flex; flex-direction: column; }
.panel h2 { margin: 0; flex: none; height: 17px; padding-left: 2px; background: #b8b8b8; font-size: 9px; line-height: 17px; font-weight: 400; }
.tabs { flex: none; display: flex; margin-top: 5px; padding-left: 1px; height: 18px; font-size: 9px; }
.tabs button { padding: 0 4px; }
.tabs .active { background: #fff; padding: 0 8px 0 4px; }
.layers { flex: none; list-style: none; margin: 0; padding: 0 16px 0 1px; position: relative; height: 323px; }
.layers::after { content: ""; position: absolute; top: 14px; bottom: 17px; right: 8px; width: 2px; background: #888; }
.layers li { display: flex; align-items: center; height: 13px; padding-left: 14px; }
.layers li:nth-child(3n + 1) { height: 14px; }
.layers .current { background: #e2e2e2; position: relative; }
.current::before { content: ""; position: absolute; left: 6px; top: 2px; border: 4px solid transparent; border-left: 4px solid #2a2aff; border-right: 0; }
.layers i { width: 11px; height: 10px; margin-right: 4px; }
.layers .check { background-image: conic-gradient(#0003 25%, #0000 25% 50%, #0003 50% 75%, #0000 75%); background-size: 6px 6px; }
.layers b { width: 11px; height: 10px; margin-right: 3px; border: 2px solid #545454; border-radius: 50%; background: radial-gradient(ellipse 4px 2px, #888 30%, #ccc 40% 100%, #eee 100%); }
.display-options { flex: none; background: #fff; margin: 0 5px 0 1px; padding: 3px 0 0 4px; height: 70px; color: #222; }
.disclosure { display: block; height: 14px; color: #777; }
.disclosure::before { content: ""; display: inline-block; border: 3px solid transparent; border-top: 4px solid #555; border-bottom: 0; margin: 0 2px 1px 2px; }
.option-label { margin-top: 3px; }
.radios { display: grid; grid-template-columns: 64px 50px 1fr; border-bottom: 1px solid #aaa; height: 17px; }
.flip { height: 18px; }
.presets { flex: none; display: flex; flex-direction: column; padding: 9px 4px 4px; }
.presets .select { margin-bottom: 3px; }
.presets label { height: 13px; }
.filters { display: grid; grid-template-columns: 70px 1fr; padding: 4px 0 0 3px; }
.filters label { height: 13px; }
.filters label:nth-child(4n), .filters label:nth-child(4n + 3) { height: 14px; }

input[type="checkbox"], input[type="radio"] { appearance: none; flex: none; width: 11px; height: 11px; border: 1px solid #777; border-radius: 2px; background: #f6f6f6; margin-right: 3px; }
.panel input[type="checkbox"], .panel input[type="radio"] { margin-right: 2px; }
input[type="checkbox"]:checked { border-color: #0560b8; background: #0560b8 url("data:image/svg+xml,%3Csvg xmlns='http://www.w3.org/2000/svg' viewBox='0 0 9 9'%3E%3Cpath d='M2 4.700l1.800 1.800L7.200 3' fill='none' stroke='white'/%3E%3C/svg%3E") center / 9px 9px no-repeat; }
input[type="radio"] { border-radius: 50%; }
input[type="radio"]:checked { border: 3px solid #0560b8; background: #fff; }
input:disabled { border-color: #ccc; background: #fafafa; }

.info { flex: none; margin: 0; height: 28px; border-top: 1px solid #fff; display: flex; gap: 26px; padding: 0 9px; color: #777; line-height: 13px; }
.info dd { margin: 0; }
.status { flex: none; height: 9px; border-top: 1px solid #ddd; display: grid; grid-template-columns: 390px 64px 136px 214px 156px 52px 143px 1fr; overflow: hidden; }
.status span { border-right: 1px solid #ddd; padding: 1px 0 0 3px; line-height: 12px; height: 14px; white-space: nowrap; }

.dialog { position: absolute; left: 354px; right: 204px; top: 0; border: 1px solid #b9b9b9; border-radius: 7px; background: #f0f0f0; padding: 0 6px 4px; box-shadow: 0 0 6px #0003; }
.dialog header { display: flex; justify-content: space-between; align-items: center; height: 25px; margin: 0 -6px; padding: 0 8px 0 5px; background: #f3f3f3; border-radius: 7px 7px 0 0; }
.dialog h1 { margin: 0; font-size: 9px; font-weight: 400; }
.dialog header svg { display: block; width: 10px; height: 10px; fill: none; stroke: #333; }
.output-row { display: flex; align-items: center; height: 29px; }
.format-label { width: 56px; }
.outdir-label { width: 79px; }
.output-row .select { width: 64px; margin-right: 22px; }
.output-row input { flex: 1; min-width: 0; height: 18px; border: 0; border-bottom: 1px solid #888; background: #fff; }
.button { height: 18px; border: 1px solid #ddd; border-bottom-color: #ccc; border-radius: 3px; background: #fdfdfd; line-height: 16px; }
.button.icon { display: flex; align-items: center; justify-content: center; width: 18px; margin-right: 3px; }
.output-row .button.icon { margin: 0 0 0 3px; }
.button.icon svg { width: 12px; height: 12px; }
fieldset { margin: 0; padding: 0 5px 5px; border: 1px solid #dedede; min-width: 0; }
legend { padding: 0 1px; line-height: 14px; height: 14px; }
.columns { display: grid; grid-template-columns: 126px 126px 1fr; gap: 8px; margin-top: 6px; }
.include, .on-all { padding: 3px 4px 5px; }
.list { position: relative; height: 252px; border: 1px solid #999; background: linear-gradient(90deg, #fff calc(100% - 15px), #f0f0f0 calc(100% - 15px)); overflow: hidden; padding: 1px 15px 0 1px; }
.on-all .list { height: 229px; }
.list::after { content: ""; position: absolute; right: 7px; top: 14px; height: 157px; width: 2px; background: #888; border-radius: 1px; }
.on-all .list::after { height: 125px; }
.list label { height: 15px; padding-left: 1px; }
.list label:nth-child(3n) { height: 14px; }
.list input[type="checkbox"] { margin-right: 2px; }
.list .selected { background: #0078d7; color: #fff; }
.selected input[type="checkbox"] { background: #7ab4e4; border-color: #4e96d3; }
.order { display: flex; padding: 5px 0 0 1px; }
.options { display: flex; flex-direction: column; gap: 8px; }
.two-col { display: grid; grid-template-columns: 207px 1fr; padding: 1px 5px 4px 6px; }
.col > * { height: 20px; }
.col > :nth-child(odd) { height: 21px; }
.col > .sub { padding-left: 17px; }
.col > .tight { height: 16px; }
.col > .loose { height: 25px; }
.off { color: #999; }
.field { display: flex; align-items: center; }
.field label { width: 53px; }
.field .select { width: 104px; }
.wide label { width: 89px; }
.wide .select { width: 127px; }
.messages { margin-top: 7px; padding-bottom: 2px; }
.messages textarea { display: block; width: 100%; height: 53px; border: 0; background: #fff; resize: none; margin-top: 4px; }
.show-row { display: flex; align-items: center; height: 24px; }
.show { width: 31px; }
.all { width: 58px; }
.errors { width: 48px; }
.warnings { width: 64px; }
.badge { background: #0a860a; color: #fff; border-radius: 50%; width: 15px; height: 13px; line-height: 13px; text-align: center; font-weight: 700; margin-right: 23px; }
.actions { width: 79px; }
.save { width: 61px; margin-left: auto; }
.dialog footer { display: flex; gap: 7px; padding-top: 5px; }
.drc { width: 62px; margin: 0 auto 0 4px; }
.primary { width: 61px; background: #e0eef9; border-color: #4b9ad8; }
.close { width: 61px; }
.drill { width: 107px; }
```
